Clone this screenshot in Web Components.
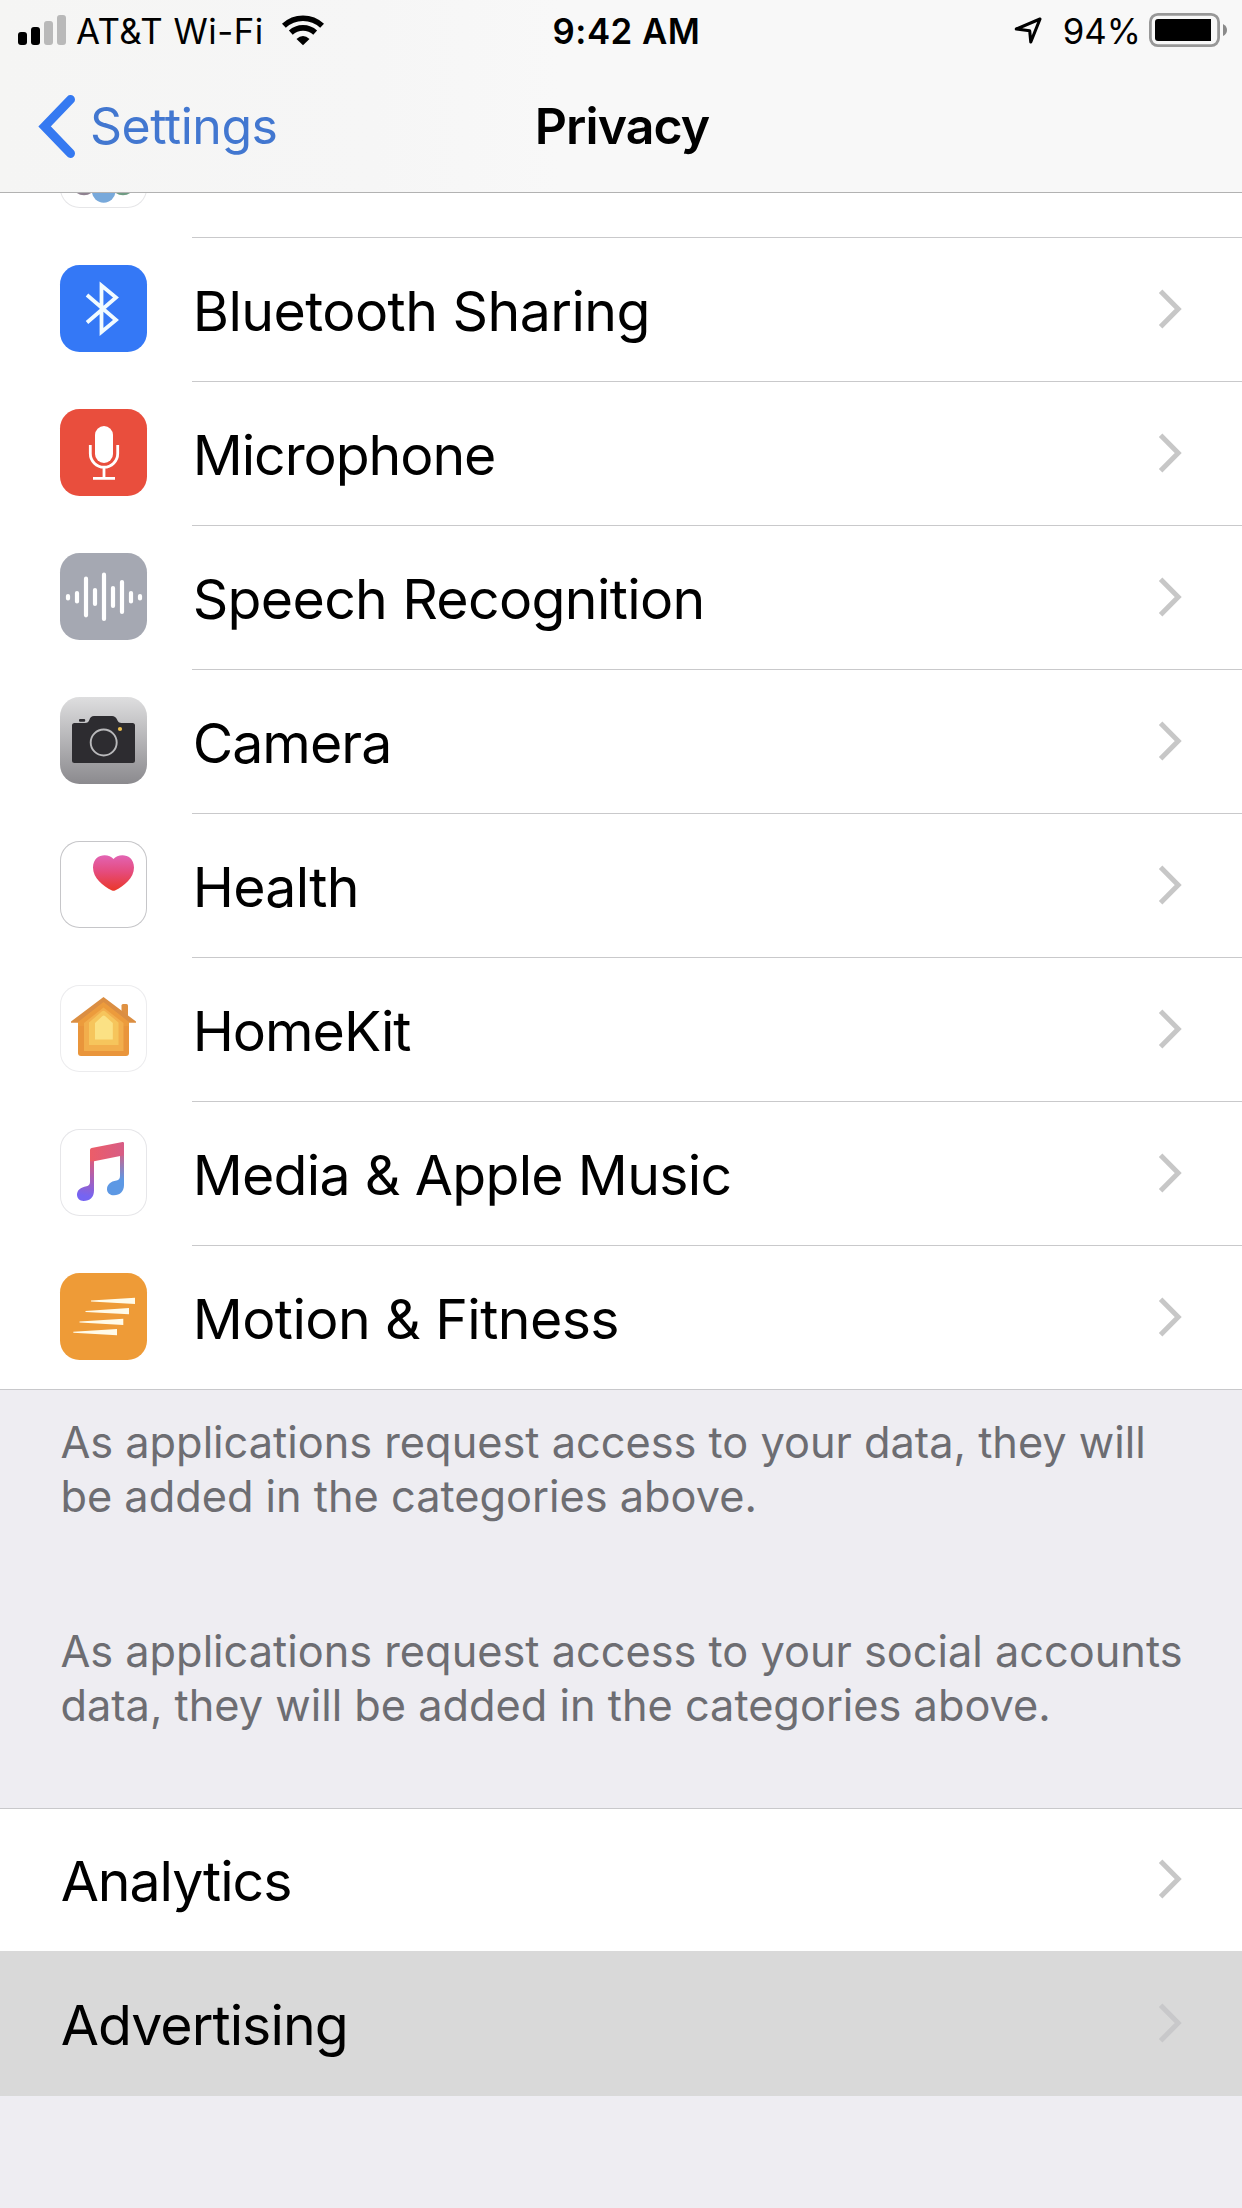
<!DOCTYPE html>
<html lang="en">
<head>
<meta charset="utf-8">
<title>Privacy</title>
<style>
html,body{margin:0;padding:0}
body{width:1242px;height:2208px;overflow:hidden;background:#eeedf2;font-family:Inter,"Liberation Sans",sans-serif;color:#000}
</style>
</head>
<body>
<privacy-screen></privacy-screen>
<script>
const define = (name, markup) => {
  const t = document.createElement('template');
  t.innerHTML = markup;
  customElements.define(name, class extends HTMLElement {
    constructor() {
      super();
      this.attachShadow({mode: 'open'}).appendChild(t.content.cloneNode(true));
    }
  });
};

define('status-bar', `
<style>
:host{display:grid;grid-template-columns:1fr auto 1fr;height:63px;line-height:63px;font-size:34.8px}
.side{display:flex;align-items:flex-start}
.right{justify-content:flex-end}
svg{display:block;flex:none}
.carrier{margin-left:9px;letter-spacing:.5px}
.time{font-weight:560;letter-spacing:.5px;padding-left:11px}
</style>
<div class="side">
  <svg width="67" height="63" viewBox="0 0 67 63"><rect x="18" y="32" width="9" height="13" rx="3"/><rect x="31" y="27" width="9" height="18" rx="3"/><g fill="#b9b9b9"><rect x="44" y="21" width="9" height="24" rx="3"/><rect x="57" y="15" width="9" height="30" rx="3"/></g></svg>
  <span class="carrier">AT&amp;T Wi-Fi</span>
  <svg width="60" height="63" viewBox="264 0 60 63"><g fill="none" stroke="#000" stroke-width="5.6"><path d="M283.9 25.8A28 28 0 0 1 322.1 25.8"/><path d="M290.8 32.6A18 18 0 0 1 315.2 32.6"/></g><path d="M296.5 39Q303 33 309.5 39L303 45.2Z"/></svg>
</div>
<div class="time">9:42 AM</div>
<div class="side right">
  <svg width="30" height="63" viewBox="1014 0 30 63" style="margin-right:20px"><path d="M1017.3 29L1041 19L1031.8 42L1030.7 30.8Z" fill="none" stroke="#000" stroke-width="3.1" stroke-linejoin="round"/></svg>
  <span class="pct">94%</span>
  <svg width="93" height="63" viewBox="1149 0 93 63" style="margin-left:8px"><rect x="1150.4" y="14.4" width="68.2" height="31.2" rx="7.5" fill="none" stroke="#989898" stroke-width="2.8"/><path d="M1158 19H1211V41H1158Q1155 41 1155 38V22Q1155 19 1158 19Z"/><path d="M1223 24Q1227 26 1227 30T1223 36Z" fill="#8a8a8a"/></svg>
</div>`);

define('nav-bar', `
<style>
:host{display:grid;grid-template-columns:1fr auto 1fr;height:126px;line-height:126px;font-size:50px;padding-bottom:3px}
.back{display:flex;color:#4277d0;letter-spacing:-.5px}
svg{display:block;flex:none}
.title{font-weight:580;letter-spacing:-.9px;padding-left:2px}
</style>
<div class="back">
  <svg width="90" height="126" viewBox="0 63 90 126"><path d="M70.5 99.5L44.6 126.4L70.5 153.4" fill="none" stroke="#3579f1" stroke-width="9" stroke-linecap="round" stroke-linejoin="miter"/></svg>
  <span><slot name="back"></slot></span>
</div>
<div class="title"><slot></slot></div><div></div>`);

define('top-chrome', `
<style>:host{display:block;border-bottom:1px solid #b2b2b2;background:linear-gradient(90deg,#f5f5f4,#f6f6f6 30%,#f8f8f8 45%,#f8f8f8)}</style>
<slot></slot>`);

define('list-row', `
<style>
:host{display:flex;height:var(--row-height,144px);box-sizing:border-box;background:#fff;overflow:hidden}
.icon{width:192px;flex:none;box-sizing:border-box;padding:27px 0 0 60px}
.body{flex:1;box-sizing:border-box;display:flex;justify-content:space-between;border-bottom:1px solid #c9c9cb;font-size:55.4px;line-height:var(--line,145px);white-space:nowrap}
.label{padding-left:.7px;letter-spacing:var(--ls,0)}
svg{display:block;margin:var(--chev,49.5px) 58px 0 0}
:host([plain]) .icon{width:60px;padding:0}
:host([plain]) .body,:host([last]) .body{border-bottom-color:transparent}
:host([pressed]){background:#d9d9d9;--tint:#c8c8ca}
:host([partial]){height:45px}
:host([partial]) .icon{align-self:flex-end;padding:0 0 30px 60px}
:host([partial]) .label,:host([partial]) svg{display:none}
</style>
<div class="icon"><slot name="icon"></slot></div>
<div class="body"><span class="label"><slot></slot></span><svg width="26" height="42" viewBox="0 0 26 42"><path d="M2.6 3.2L20.2 21L2.6 38.8" fill="none" stroke="var(--tint,#c7c7c7)" stroke-width="5"/></svg></div>`);

define('footer-note', `
<style>:host{display:block;padding:0 60.4px;font-size:43.3px;line-height:54px;color:#6d6d72;white-space:nowrap}</style>
<slot></slot>`);

const tiles = {
photos:['#fff','#e6e6e8',`<circle cx="24" cy="62" r="12.3" fill="#8f8190"/><circle cx="63" cy="62" r="12.3" fill="#6f9c83"/><circle cx="43.7" cy="70" r="11.8" fill="#78a9db"/>`],
bluetooth:['#3478f6','',`<path d="M27 30L56 55L41.500 67V20.500L56 32.500L27 57.500" fill="none" stroke="#f1fbff" stroke-width="3.8"/>`],
microphone:['#e94e3d','',`<rect x="35" y="17" width="18" height="37" rx="9" fill="#fff"/><path d="M30.3 36V44.5A13.7 13.7 0 0 0 57.7 44.5V36M44 58.5V69.3M33 69.3H55" fill="none" stroke="#fff" stroke-width="2.8"/>`],
speech:['#a5a8b2','',`<path d="M8 43V45.4M17 40V48.4M26 25.7V62.3M35 37V51M44 21.7V66M53 35V53M62 29V59M71 40V48.4M80 43V45.4" stroke="#fff" stroke-width="4.2" stroke-linecap="round"/>`],
camera:['linear-gradient(#dededf,#8b8a8e)','',`<path d="M14.500 26H25Q28.500 26 29.500 22.500Q30.500 19 34 19H52Q55.500 19 57 22.500Q58.300 26 61.500 26H72.500Q75 26 75 28.500V63.500Q75 66 72.500 66H14.500Q12 66 12 63.500V28.500Q12 26 14.500 26Z" fill="#2d2c30"/><rect x="19" y="22" width="6.200" height="2.800" rx="1" fill="#2d2c30"/><circle cx="43.700" cy="45.500" r="13" fill="none" stroke="#b9b9bb" stroke-width="1.900"/><circle cx="60" cy="32" r="2.100" fill="#edc04f"/>`],
health:['#fff','#c6c6c9',`<defs><linearGradient id="h" x2="0" y2="1"><stop stop-color="#e264b4"/><stop offset=".45" stop-color="#e54c7f"/><stop offset="1" stop-color="#ea3829"/></linearGradient></defs><path d="M53.500 18C49 12 33.200 11.800 33 26.500C33 37 43 45 52 49.500Q53.500 50.200 55 49.500C64 45 74 37 74 26.500C73.800 11.800 58 12 53.500 18Z" fill="url(#h)"/>`],
home:['#fff','#ececee',`<path d="M61.500 30V20.500Q61.500 19 63 19H66.500Q68 19 68 20.500V34Z" fill="#df9142"/><path d="M18 34H69V68Q69 71 66 71H21Q18 71 18 68Z" fill="#e9953b"/><path d="M43.500 12L76 36.500V37.800H69L43.500 18L18 37.800H11V36.500Z" fill="#db8e42"/><path d="M43.500 17L69 37V41H18V37Z" fill="#ec9b3c"/><path d="M43.500 22.500L63.500 38V66H24V38Z" fill="#f2ae4c"/><path d="M42 26.300Q43.500 25 45 26.300L58.500 37.500V60H29V37.500Z" fill="#f6c55c"/><path d="M42.500 31Q43.700 30 45 31L52.800 38V54.500H35V38Z" fill="#fbe184"/>`],
music:['#fff','#e6e6e9',`<defs><linearGradient id="m" gradientUnits="userSpaceOnUse" x1="30" y1="18" x2="20" y2="66"><stop offset=".15" stop-color="#e95a6c"/><stop offset="1" stop-color="#7564f2"/></linearGradient><linearGradient id="n" gradientUnits="userSpaceOnUse" x1="60" y1="14" x2="58" y2="60"><stop offset=".15" stop-color="#dd5b7e"/><stop offset=".8" stop-color="#5d98e4"/></linearGradient><linearGradient id="b"><stop stop-color="#ec5d68"/><stop offset="1" stop-color="#d75c85"/></linearGradient></defs><path d="M30 20.500V53Q30 56.500 26.500 57.200C20.500 58.300 17 61 17 65.800C17 69.500 19.800 72 23.500 72C30 72 34 68 34 61.500V26H30Z" fill="url(#m)"/><path d="M64 14V56C64 62.500 60 66.300 54 66.300C50 66.300 47 63.800 47 60.200C47 55.500 50.500 52.500 56.500 51.500Q60 50.800 60 47V20Z" fill="url(#n)"/><path d="M31.500 19L62.500 13Q64 12.700 64 14.300V26.200L34 32.200H30V21Q30 19.300 31.500 19Z" fill="url(#b)"/>`],
motion:['#ee9b37','',`<path d="M31 27.600L75 24.700V31L31 28.600ZM25.500 38L69 35V41.200L25.500 39ZM19.500 48.400L63.300 45.800V52L19.500 49.400ZM13.300 58.800L57 56V62.200L13.300 59.800Z" fill="#fffbe9"/>`]
};
customElements.define('app-icon', class extends HTMLElement {
  constructor(){ super(); this.attachShadow({mode:'open'}); }
  connectedCallback(){
    const [bg, edge, art] = tiles[this.getAttribute('name')];
    this.shadowRoot.innerHTML = `<style>:host{display:block;width:87px;height:87px;border-radius:19.500px;background:${bg};${edge ? `box-shadow:inset 0 0 0 1px ${edge}` : ''}}svg{display:block}</style><svg width="87" height="87" viewBox="0 0 87 87">${art}</svg>`;
  }
});

define('privacy-screen', `
<style>
:host{display:block}
.end{height:1px;background:#c8c8cb}
.notes{padding-top:25px}
.notes footer-note + footer-note{margin-top:101px}
.group{border-top:1px solid #c8c8cb;margin-top:76px}
</style>
<top-chrome><status-bar></status-bar><nav-bar><span slot="back">Settings</span>Privacy</nav-bar></top-chrome>
<div class="list">
<list-row partial><app-icon slot="icon" name="photos"></app-icon></list-row>
<list-row style="--ls:-.54px"><app-icon slot="icon" name="bluetooth"></app-icon>Bluetooth Sharing</list-row>
<list-row style="--ls:-1.05px"><app-icon slot="icon" name="microphone"></app-icon>Microphone</list-row>
<list-row style="--ls:-.65px"><app-icon slot="icon" name="speech"></app-icon>Speech Recognition</list-row>
<list-row style="--ls:-.95px"><app-icon slot="icon" name="camera"></app-icon>Camera</list-row>
<list-row style="--ls:-.7px"><app-icon slot="icon" name="health"></app-icon>Health</list-row>
<list-row style="--ls:-1px"><app-icon slot="icon" name="home"></app-icon>HomeKit</list-row>
<list-row style="--ls:-.7px"><app-icon slot="icon" name="music"></app-icon>Media &amp; Apple Music</list-row>
<list-row last style="--row-height:143px;--ls:-.56px"><app-icon slot="icon" name="motion"></app-icon>Motion &amp; Fitness</list-row>
</div>
<div class="end"></div>
<div class="notes">
<footer-note>As applications request access to your data, they will<br>be added in the categories above.</footer-note>
<footer-note>As applications request access to your social accounts<br>data, they will be added in the categories above.</footer-note>
</div>
<div class="group">
<list-row plain style="--row-height:142px;--line:143px;--chev:48.7px;--ls:-1.05px">Analytics</list-row>
<list-row plain pressed style="--row-height:145px;--line:147px;--chev:51px;--ls:-.94px">Advertising</list-row>
</div>`);
</script>
</body>
</html>
